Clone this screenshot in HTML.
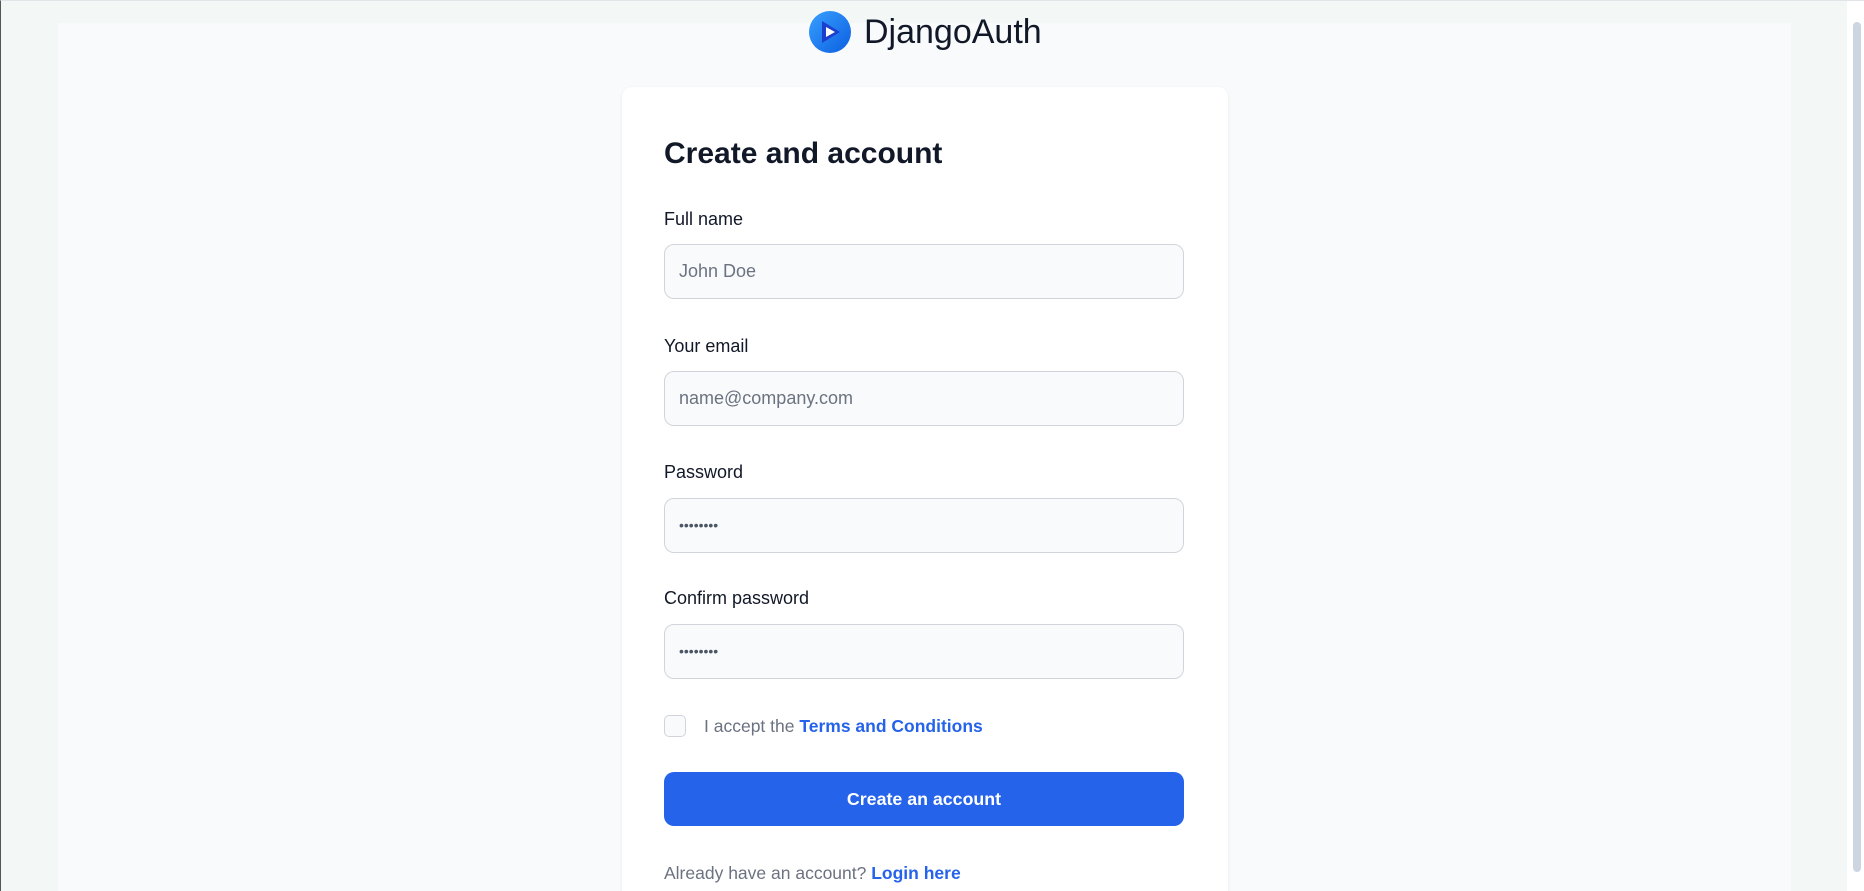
<!DOCTYPE html>
<html><head><meta charset="utf-8"><style>
*{box-sizing:border-box;margin:0;padding:0}
html,body{width:1864px;height:891px;overflow:hidden}
body{background:#f3f8f7;font-family:"Liberation Sans",Arial,sans-serif;position:relative;border-top:1px solid #e2e5e7;border-left:1px solid #555}
.panel{position:absolute;left:57px;top:22px;width:1733px;height:869px;background:#f9fafb}
.logo{position:absolute;left:808px;top:10px;display:flex;align-items:center}
.logo span{font-size:34px;color:#111827;margin-left:13px;line-height:42px}
.card{position:absolute;left:621px;top:86px;width:606px;height:805px;background:#fff;border-radius:10px 10px 0 0;box-shadow:0 1px 3px rgba(0,0,0,.08)}
h1{position:absolute;left:42px;top:50px;font-size:30px;font-weight:bold;color:#111827;white-space:nowrap}
.lab{position:absolute;left:42px;font-size:18px;color:#111827}
.inp{position:absolute;left:42px;width:520px;height:55px;background:#f9fafb;border:1px solid #d1d5db;border-radius:10px;font-size:18px;color:#6b7280;padding-left:14px;line-height:53px}
.dots{font-size:14px;color:#4b5563}
.cb{position:absolute;left:42px;top:628px;width:22px;height:22px;border:1px solid #d1d5db;border-radius:5px;background:#f9fafb}
.acc{position:absolute;left:82px;top:629px;font-size:17.5px;color:#6b7280;white-space:nowrap}
a{color:#2563eb;font-weight:bold;text-decoration:none}
.btn{position:absolute;left:42px;top:685px;width:520px;height:54px;background:#2563eb;border-radius:10px;color:#fff;font-size:17.8px;font-weight:bold;text-align:center;line-height:54px}
.al{position:absolute;left:42px;top:776px;font-size:17.5px;color:#6b7280;white-space:nowrap}
.sb{position:absolute;left:1846px;top:0;width:18px;height:891px;background:#fff}
.th{position:absolute;left:6px;top:21px;width:8px;height:850px;background:#cdd6e0;border-radius:4px}
</style></head><body>
<div class="panel"></div>
<div class="logo">
<svg width="42" height="42" viewBox="0 0 42 42"><defs><linearGradient id="g" x1="0" y1="0" x2="1" y2="1"><stop offset="0" stop-color="#38a0ff"/><stop offset="1" stop-color="#0b5ee0"/></linearGradient></defs><circle cx="21" cy="21" r="21" fill="url(#g)"/><path d="M13 10 L31 21 L13 32 Z" fill="#1d3fcf"/><path d="M17 16 L26 21 L17 26 Z" fill="#fff"/></svg>
<span>DjangoAuth</span></div>
<div class="card">
<h1>Create and account</h1>
<div class="lab" style="top:122px">Full name</div>
<div class="inp" style="top:157px">John Doe</div>
<div class="lab" style="top:249px">Your email</div>
<div class="inp" style="top:284px">name@company.com</div>
<div class="lab" style="top:375px">Password</div>
<div class="inp dots" style="top:411px">••••••••</div>
<div class="lab" style="top:501px">Confirm password</div>
<div class="inp dots" style="top:537px">••••••••</div>
<div class="cb"></div>
<div class="acc">I accept the <a>Terms and Conditions</a></div>
<div class="btn">Create an account</div>
<div class="al">Already have an account? <a>Login here</a></div>
</div>
<div class="sb"><div class="th"></div></div>
</body></html>
